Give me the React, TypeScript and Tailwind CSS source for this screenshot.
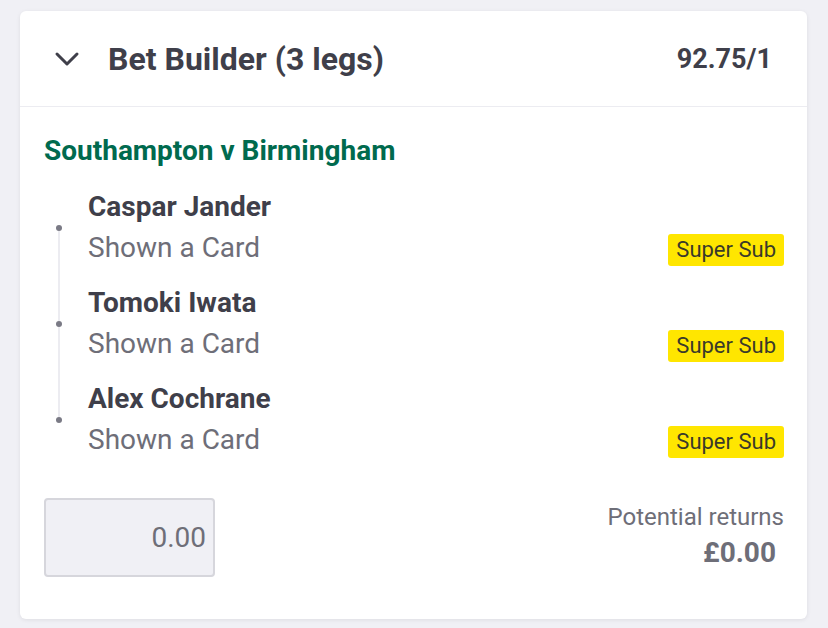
import React from "react";

const legs = [
  { name: "Caspar Jander", market: "Shown a Card" },
  { name: "Tomoki Iwata", market: "Shown a Card" },
  { name: "Alex Cochrane", market: "Shown a Card" },
];

const ChevronDown = () => (
  <svg width="26" height="16" viewBox="0 0 26 16" fill="none">
    <path
      d="M3 3l10 10 10-10"
      stroke="#3f3f4a"
      strokeWidth="3"
      strokeLinecap="round"
      strokeLinejoin="round"
    />
  </svg>
);

const App = () => {
  return (
    <div
      className="w-[828px] h-[628px] bg-[#f0f0f5] pt-[11px] pl-[20px] overflow-hidden"
      style={{ fontFamily: "Roboto, 'Liberation Sans', sans-serif" }}
    >
      <div className="w-[787px] bg-white rounded-[6px] shadow-[0_1px_4px_rgba(0,0,0,0.08)] flex flex-col">
        {/* header */}
        <div className="h-[96px] flex items-center justify-between border-b border-[#ececf1] pl-[34px] pr-[35px]">
          <div className="flex items-center gap-[28px]">
            <ChevronDown />
            <span className="text-[32px] font-bold text-[#3f3f4a] leading-[40px]">
              Bet Builder (3 legs)
            </span>
          </div>
          <span className="text-[27px] font-bold text-[#3f3f4a] leading-[36px]">
            92.75/1
          </span>
        </div>

        {/* body */}
        <div className="pl-[24px] pr-[23px] pt-[26px] pb-[42px]">
          <div className="text-[28px] font-bold text-[#006a4e] leading-[36px]">
            Southampton v Birmingham
          </div>

          <div className="relative mt-[20px]">
            <div className="absolute left-[14px] top-[39px] h-[192px] w-[2px] bg-[#ececf1]" />
            {legs.map((leg) => (
              <div key={leg.name} className="relative h-[96px] pl-[44px]">
                <div className="absolute left-[12px] top-[36px] w-[6px] h-[6px] rounded-full bg-[#7a7a85]" />
                <div className="text-[28px] font-bold text-[#3f3f4a] leading-[36px]">
                  {leg.name}
                </div>
                <div className="flex items-center justify-between mt-[5px]">
                  <span className="text-[28px] text-[#6e6e78] leading-[36px]">
                    {leg.market}
                  </span>
                  <span className="bg-[#ffe600] text-[#3a3a2a] text-[22px] leading-[32px] px-[8px] rounded-[3px] mt-[4px]">
                    Super Sub
                  </span>
                </div>
              </div>
            ))}
          </div>

          {/* footer */}
          <div className="flex items-start justify-between mt-[21px]">
            <div className="w-[171px] h-[79px] bg-[#f0f0f5] border-2 border-[#d6d6dc] rounded-[4px] flex items-center justify-end pr-[7px]">
              <span className="text-[28px] text-[#6e6e78]">0.00</span>
            </div>
            <div className="flex flex-col items-end pt-[5px]">
              <span className="text-[24px] text-[#6e6e78] leading-[28px]">
                Potential returns
              </span>
              <span className="text-[28px] font-bold text-[#6e6e78] leading-[36px] mt-[4px] pr-[8px]">
                £0.00
              </span>
            </div>
          </div>
        </div>
      </div>
    </div>
  );
};

export default App;
